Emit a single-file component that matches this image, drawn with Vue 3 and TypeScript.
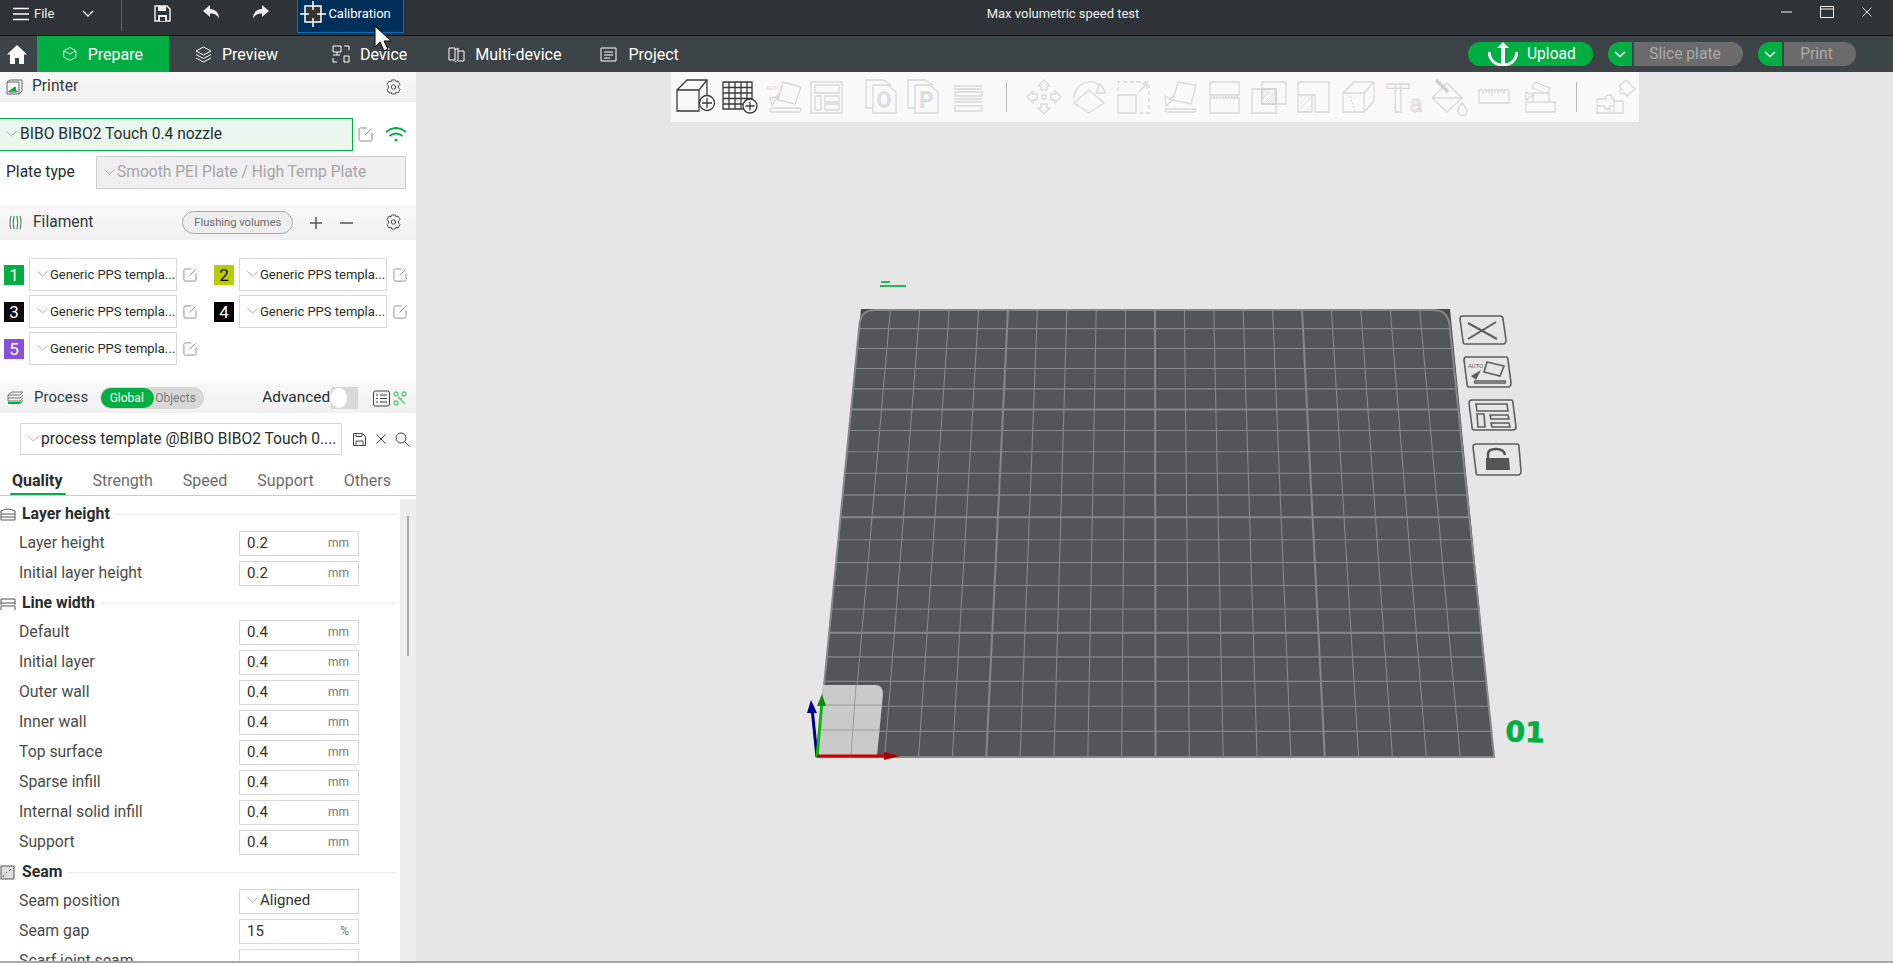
<script setup lang="ts">
interface Filament {
  id: number;
  color: string;
  dark?: boolean;
}

interface Setting {
  label: string;
  value: string;
  unit?: string;
  select?: boolean;
}

interface Group {
  title: string;
  icon: string;
  rows: Setting[];
}

const filaments: Filament[] = [
  { id: 1, color: "#00ae42" },
  { id: 2, color: "#b9cc00", dark: true },
  { id: 3, color: "#0a0a0a" },
  { id: 4, color: "#000000" },
  { id: 5, color: "#8a4fe0" },
];

const mm = (label: string, value: string): Setting => ({ label, value, unit: "mm" });

const groups: Group[] = [
  {
    title: "Layer height",
    icon: '<path d="M1 5q7-4 14 0M1 8h14M1 11h14M1 14h14M1 5v9M15 5v9" />',
    rows: [mm("Layer height", "0.2"), mm("Initial layer height", "0.2")],
  },
  {
    title: "Line width",
    icon: '<path d="M1 4h14v4H1zM1 8v2M15 8v2M1 11h14M1 11v4M15 11v4" />',
    rows: [
      mm("Default", "0.4"),
      mm("Initial layer", "0.4"),
      mm("Outer wall", "0.4"),
      mm("Inner wall", "0.4"),
      mm("Top surface", "0.4"),
      mm("Sparse infill", "0.4"),
      mm("Internal solid infill", "0.4"),
      mm("Support", "0.4"),
    ],
  },
  {
    title: "Seam",
    icon: '<rect x="1" y="2" width="13" height="13" fill="#ddd" /><path d="M3 13l1-2M6 9l1-1M9 7l2-2" />',
    rows: [
      { label: "Seam position", value: "Aligned", select: true },
      { label: "Seam gap", value: "15", unit: "%" },
      { label: "Scarf joint seam", value: "" },
    ],
  },
];

const processTabs = ["Quality", "Strength", "Speed", "Support", "Others"];

const line = "#d9d9d9";
const topIcons: string[] = [
  `<path d="M0 11h22v21H0zM0 11L10 1h20v15M22 11l8-10M22 26v6" stroke="#3a3a3a"/><circle cx="30" cy="24" r="7.5" fill="#fff" stroke="#3a3a3a"/><path d="M30 19v10M25 24h10" stroke="#3a3a3a"/>`,
  `<path d="M1 3h29v27H1zM1 8.5h29M1 14h29M1 19.5h29M1 25h29M7 3v27M13 3v27M19 3v27M25 3v27" stroke="#3a3a3a"/><circle cx="28" cy="27" r="7" fill="#fff" stroke="#3a3a3a"/><path d="M28 22.5v9M23.5 27h9" stroke="#3a3a3a"/>`,
  `<path d="M18 3l18 5-6 17-17-4zM7 29h27q2 0 2 2t-2 2H7q-2 0-2-2t2-2zM5 19l8-1-6 8zM9 20l5-6"/><text x="1" y="11" font-size="6" font-family="Roboto, sans-serif" fill="#d9d9d9" stroke="none">AUTO</text>`,
  `<path d="M3 3h31v31H3zM7 6h24v8H7zM7 17h6v14H7zM17 17h14v6H17zM17 25h14v6H17z"/>`,
  `<path d="M10 29H3V1h17l8 5v0M10 6h15l8 7v21H10z"/><text x="21" y="28" text-anchor="middle" font-size="21" font-family="Roboto, sans-serif" fill="none">O</text>`,
  `<path d="M10 29H3V1h17l8 5v0M10 6h15l8 7v21H10z"/><text x="21" y="28" text-anchor="middle" font-size="21" font-family="Roboto, sans-serif" fill="none">P</text>`,
  `<path d="M4 7h28M4 10h28M5 13h27v4H5zM4 20h28M4 23h28M5 27h27v5H5z"/>`,
  `<path d="M19 1l6 6h-3v4h-6V7h-3zM19 35l6-6h-3v-4h-6v4h-3zM2 18l6-6v3h4v6H8v3zM36 18l-6-6v3h-4v6h4v3z"/><rect x="17" y="16" width="4" height="4"/>`,
  `<path d="M3 24l15-13 15 13-15 10zM3 19C3 8 13 2 22 3q3 .5 6 3M29 5l6 9H25z"/>`,
  `<path d="M2 16h18v18H2z"/><path d="M2 12V3h31v31H24M24 3h-4" stroke-dasharray="4 3"/><path d="M22 14l9-9M26 5h5v5"/>`,
  `<path d="M17 3l18 3-5 19-18-4zM6 30h27q2 0 2 1.500t-2 1.500H6q-2 0-2-1.500T6 30zM4 17l8 4-7 6zM8 21l5-5"/>`,
  `<path d="M4 3h29v13H4zM4 19h29v15H4z"/><path d="M4 17.500h29" stroke-dasharray="1.500 1.500"/>`,
  `<path d="M1 10h24v24H1zM11 3h24v22H11z"/><path d="M11 10h14v15H11z" fill="#f2f2f2" stroke-width="1.600" stroke="#d0d0d0"/><path d="M13 25l12-12M17 25l8-8M21 25l4-4M11 21l8-11M11 15l4-5" stroke-width=".8"/>`,
  `<path d="M2 3h31v30H19V16H2zM2 16v17h14V16"/><path d="M4 24l8-8M4 30l12-13M9 33l7-8M4 19l3-3" stroke-width=".8"/>`,
  `<path d="M2 14h21v19H2zM2 14L13 3h20v19L23 33M23 14L33 3"/><path d="M8 14l2 6 2 6 2 6" stroke-dasharray="1.500 2"/>`,
  `<text x="12" y="33" text-anchor="middle" font-size="38" font-weight="700" font-family="Roboto, sans-serif" fill="none">T</text><text x="30" y="33" text-anchor="middle" font-size="24" font-family="Roboto, sans-serif" fill="none" stroke-width="1">a</text>`,
  `<path d="M1 19L16 4l15 15-15 14zM1 19h30"/><path d="M5 1l12 12" stroke-width="3.500" stroke="#cfcfcf"/><path d="M31 24q-5 6-4 8a4 4 0 0 0 9 0q0-2-5-8z"/>`,
  `<path d="M3 11h30v13H3zM7 11v4M10 11v3M13 11v4M16 11v6M19 11v3M22 11v4M25 11v3M28 11v4"/>`,
  `<path d="M5 23h29v10H5zM14 3l15 6-3 6-15-6zM12 14h16v9H12z"/><path d="M5 13l7 3-7 5z"/>`,
  `<path d="M2 20h9q-1-4 3-4t3 4h2v14H2zM2 27h7q0 3 3 3t3-3h4M15 34v-7M19 22h9v12H19M24 7l7-6 9 9-8 7-3-3q-3 2-4-1t2-3z"/>`,
];

// small offsets between icons, the toolbar spacing is not quite even
const toolShift: Record<number, string> = {
  2: "shift-a",
  3: "shift-a",
  4: "shift-b",
  5: "shift-c",
  7: "shift-d",
  8: "shift-e",
};

const gridLines = (() => {
  const top = { l: 861, r: 1449, y: 309 };
  const bottom = { l: 817, r: 1494, y: 757 };
  const k = (bottom.r - bottom.l) / (top.r - top.l);
  const h: { x1: number; x2: number; y: number; major: boolean }[] = [];
  const v: { x1: number; x2: number; major: boolean }[] = [];
  for (let i = 1; i < 20; i++) {
    const r = i / 20;
    const y = top.y + ((bottom.y - top.y) * r) / (r + (1 - r) * k);
    const f = (y - top.y) / (bottom.y - top.y);
    h.push({
      x1: top.l + (bottom.l - top.l) * f,
      x2: top.r + (bottom.r - top.r) * f,
      y,
      major: i % 5 === 0,
    });
    v.push({
      x1: top.l + (top.r - top.l) * r,
      x2: bottom.l + (bottom.r - bottom.l) * r,
      major: i % 5 === 0,
    });
  }
  return { h, v, topY: top.y, bottomY: bottom.y };
})();
</script>

<template>
  <div class="app">
    <header class="titlebar">
      <div class="file-menu">
        <svg class="ico" width="16" height="14" viewBox="0 0 16 14"><path d="M0 1.500h16M0 7h16M0 12.500h16" stroke="#fff" stroke-width="1.300" /></svg>
        <span>File</span>
      </div>
      <svg class="file-chevron" width="12" height="7" viewBox="0 0 12 7"><path d="M1 1l5 5 5-5" fill="none" stroke="#fff" stroke-width="1.300" /></svg>
      <i class="title-sep"></i>
      <svg class="quick first" width="17" height="17" viewBox="0 0 17 17"><path d="M1 1h12l3 3v12H1z" fill="none" stroke="#eee" stroke-width="1.500" /><path d="M4 1h8v5H4zM4 10h9v6H4z" fill="#eee" /><path d="M6 12h5v4H6z" fill="#2d3336" /></svg>
      <svg class="quick" width="17" height="14" viewBox="0 0 17 14"><path d="M7 0L0 6l7 6V8.500c4 0 7 1 9 5 0-6-4-9.500-9-9.500z" fill="#eee" /></svg>
      <svg class="quick" width="17" height="14" viewBox="0 0 17 14"><path d="M10 0l7 6-7 6V8.500c-4 0-7 1-9 5 0-6 4-9.500 9-9.500z" fill="#eee" /></svg>
      <button class="calibration">
        <svg width="26" height="26" viewBox="0 0 26 26"><rect x="5" y="5" width="16" height="16" fill="#333" stroke="#fff" stroke-width="1.500" /><path d="M13 0v9M13 17v9M0 13h9M17 13h9" stroke="#fff" stroke-width="1.500" /></svg>
        <span>Calibration</span>
      </button>
      <div class="window-title">Max volumetric speed test</div>
      <div class="window-controls">
        <svg width="11" height="2" viewBox="0 0 11 2"><path d="M0 1h11" stroke="#eee" /></svg>
        <svg width="14" height="12" viewBox="0 0 14 12"><path d="M.5.500h13v11H.5zM.5 3h13" fill="none" stroke="#eee" /></svg>
        <svg width="10" height="10" viewBox="0 0 10 10"><path d="M.5.500l9 9M9.500.500l-9 9" stroke="#ddd" /></svg>
      </div>
    </header>

    <nav class="tabbar">
      <svg class="home" width="20" height="19" viewBox="0 0 20 19"><path d="M10 0L0 9.500h3V19h5v-6h4v6h5V9.500h3z" fill="#fff" /></svg>
      <div class="tab active">
        <svg width="17" height="18" viewBox="0 0 17 18"><path d="M8.500 1l7.500 4v8l-7.500 4L1 13V5zM1 5l7.500 4L16 5M8.500 9" fill="none" stroke="#fff" /></svg>
        <span>Prepare</span>
      </div>
      <div class="tab tab-preview">
        <svg width="17" height="18" viewBox="0 0 17 18"><path d="M8.500 2L16 6l-7.500 4L1 6zM1 9.500l7.500 4 7.500-4M1 13l7.500 4 7.500-4" fill="none" stroke="#fff" /></svg>
        <span>Preview</span>
      </div>
      <div class="tab tab-device">
        <svg width="18" height="18" viewBox="0 0 18 18"><path d="M1 1h8v6H1zM5 7v3M1 10h7M12 1h5v4M1 13v4h4M12 17V11h5v6z" fill="none" stroke="#fff" /></svg>
        <span>Device</span>
      </div>
      <div class="tab tab-multi">
        <svg width="17" height="17" viewBox="0 0 17 17"><path d="M1 2h6v12H1zM7 4l3-2v12l-3 2M10 5h6v10h-6" fill="none" stroke="#fff" /></svg>
        <span>Multi-device</span>
      </div>
      <div class="tab">
        <svg width="17" height="17" viewBox="0 0 17 17"><path d="M1 2h15v13H1zM4 6h9M4 9h9M4 12h6" fill="none" stroke="#fff" /></svg>
        <span>Project</span>
      </div>

      <div class="actions">
        <div class="pill upload">
          <svg width="30" height="24" viewBox="0 0 30 24"><path d="M15 0l6 6h-4v16h-4V6H9z" fill="#fff" /><path d="M1 10c1 10 8 13 14 13s13-3 14-13" fill="none" stroke="#fff" stroke-width="3" /></svg>
          <span>Upload</span>
        </div>
        <div class="split">
          <span class="split-arrow"><svg width="12" height="7" viewBox="0 0 12 7"><path d="M1 1l5 4.500L11 1" fill="none" stroke="#fff" stroke-width="1.500" /></svg></span>
          <span class="split-label slice">Slice plate</span>
        </div>
        <div class="split">
          <span class="split-arrow"><svg width="12" height="7" viewBox="0 0 12 7"><path d="M1 1l5 4.500L11 1" fill="none" stroke="#fff" stroke-width="1.500" /></svg></span>
          <span class="split-label print">Print</span>
        </div>
      </div>
    </nav>

    <div class="workspace">
      <aside class="sidebar">
        <section class="panel-head printer-head">
          <svg width="17" height="16" viewBox="0 0 17 16"><path d="M1 3h12v12H1zM1 3l3-2h12v11l-3 3M3 12h8v1H3z" fill="none" stroke="#666" /><path d="M3 12l5-4h2v4z" fill="#00ae42" /></svg>
          <span class="head-title">Printer</span>
          <svg class="gear" width="17" height="17" viewBox="0 0 17 17"><path d="M6.500 1h4l.5 2 2-1 2 3.500-1.500 1.500v2L15 10.500 13 14l-2-1-.5 2h-4L6 13l-2 1-2-3.500L3.500 9V7L2 5.500 4 2l2 1z" fill="none" stroke="#555" /><circle cx="8.500" cy="8" r="2.200" fill="none" stroke="#555" /></svg>
        </section>

        <div class="printer-row">
          <div class="printer-select">
            <svg class="chev" width="11" height="6" viewBox="0 0 11 6"><path d="M.5.500l5 4.500 5-4.500" fill="none" stroke="#aaa" /></svg>
            <span>BIBO BIBO2 Touch 0.4 nozzle</span>
          </div>
          <svg class="edit" width="15" height="15" viewBox="0 0 15 15"><path d="M9 1H2.500Q1 1 1 2.500v10Q1 14 2.500 14h10q1.500 0 1.500-1.500V6M7 8l6.500-6.500" fill="none" stroke="#8a8a8a" /></svg>
          <svg class="wifi" width="22" height="15" viewBox="0 0 22 15"><path d="M1 5q10-8 20 0M4.500 9q6.500-5 13 0" fill="none" stroke="#00ae42" stroke-width="2" /><circle cx="11" cy="13" r="1.500" fill="#00ae42" /></svg>
        </div>

        <div class="plate-row">
          <span class="plate-label">Plate type</span>
          <div class="plate-select">
            <svg class="chev" width="11" height="6" viewBox="0 0 11 6"><path d="M.5.500l5 4.500 5-4.500" fill="none" stroke="#aaa" /></svg>
            <span>Smooth PEI Plate / High Temp Plate</span>
          </div>
        </div>

        <section class="panel-head filament-head">
          <svg width="15" height="15" viewBox="0 0 15 15"><path d="M3 1q-2 6.500 0 13M12 1q2 6.500 0 13" fill="none" stroke="#777" stroke-width="1.200" /><path d="M6 1q-1.500 6.500 0 13M9 1q1.500 6.500 0 13" fill="none" stroke="#00ae42" stroke-width="1.200" /></svg>
          <span class="head-title">Filament</span>
          <span class="flushing">Flushing volumes</span>
          <svg class="fil-add" width="12" height="12" viewBox="0 0 12 12"><path d="M6 0v12M0 6h12" stroke="#555" stroke-width="1.500" /></svg>
          <svg class="fil-del" width="13" height="12" viewBox="0 0 13 12"><path d="M0 6h13" stroke="#555" stroke-width="1.500" /></svg>
          <svg class="gear" width="17" height="17" viewBox="0 0 17 17"><path d="M6.500 1h4l.5 2 2-1 2 3.500-1.500 1.500v2L15 10.500 13 14l-2-1-.5 2h-4L6 13l-2 1-2-3.500L3.500 9V7L2 5.500 4 2l2 1z" fill="none" stroke="#555" /><circle cx="8.500" cy="8" r="2.200" fill="none" stroke="#555" /></svg>
        </section>

        <div class="filaments">
          <div v-for="f in filaments" :key="f.id" class="filament">
            <span class="swatch" :class="{ dark: f.dark }" :style="{ background: f.color }">{{ f.id }}</span>
            <div class="fil-select">
              <svg class="chev" width="11" height="6" viewBox="0 0 11 6"><path d="M.5.500l5 4.500 5-4.500" fill="none" stroke="#aaa" /></svg>
              <span>Generic PPS templa...</span>
            </div>
            <svg width="14" height="14" viewBox="0 0 15 15"><path d="M9 1H2.500Q1 1 1 2.500v10Q1 14 2.500 14h10q1.500 0 1.500-1.500V6M7 8l6.500-6.500" fill="none" stroke="#8a8a8a" /></svg>
          </div>
        </div>

        <section class="panel-head process-head">
          <svg width="17" height="16" viewBox="0 0 17 16"><path d="M1 5l4-3h11l-3 3zM1 5v3h12l3-3M1 8v3h12l3-3" fill="none" stroke="#777" /><path d="M1 11v3h12l3-3v-1L13 12H1z" fill="#00ae42" /></svg>
          <span class="head-title process-title">Process</span>
          <div class="seg">
            <span class="seg-on">Global</span>
            <span class="seg-off">Objects</span>
          </div>
          <span class="advanced">Advanced</span>
          <span class="switch"><i></i></span>
          <svg class="list-ico" width="17" height="17" viewBox="0 0 17 17"><rect x=".5" y="1" width="16" height="15" rx="2" fill="none" stroke="#444" /><path d="M3 5h2M7 5h7M3 8.500h2M7 8.500h7M3 12h2M7 12h7" stroke="#444" /></svg>
          <svg class="tool-ico" width="14" height="15" viewBox="0 0 14 15"><g fill="none" stroke="#5cc48a" stroke-width="1.300"><circle cx="3" cy="3" r="2" /><circle cx="11" cy="3" r="2" /><circle cx="3" cy="12" r="2" /><path d="M5 6l7 7M9 7l-2 2" /></g></svg>
        </section>

        <div class="preset-row">
          <div class="preset-select">
            <svg class="chev" width="11" height="6" viewBox="0 0 11 6"><path d="M.5.500l5 4.500 5-4.500" fill="none" stroke="#aaa" /></svg>
            <span>process template @BIBO BIBO2 Touch 0....</span>
          </div>
          <svg width="13" height="13" viewBox="0 0 13 13"><path d="M.5.500h9l3 3v9H.5zM3 .5v3h6v-3M3 12.500V8h7v4.500" fill="none" stroke="#444" /></svg>
          <svg class="preset-x" width="10" height="10" viewBox="0 0 10 10"><path d="M.5.500l9 9M9.500.500l-9 9" stroke="#444" /></svg>
          <svg width="15" height="15" viewBox="0 0 15 15"><circle cx="6" cy="6" r="5" fill="none" stroke="#444" /><path d="M9.500 9.500l5 5" stroke="#444" /></svg>
        </div>

        <div class="process-tabs">
          <span v-for="(t, i) in processTabs" :key="t" class="ptab" :class="{ on: i === 0 }">{{ t }}</span>
        </div>

        <div class="settings">
          <template v-for="g in groups" :key="g.title">
            <div class="group-head">
              <svg width="16" height="16" viewBox="0 0 16 16" fill="none" stroke="#555" v-html="g.icon"></svg>
              <span>{{ g.title }}</span>
              <i></i>
            </div>
            <div v-for="r in g.rows" :key="r.label" class="row">
              <span class="row-label">{{ r.label }}</span>
              <div class="field" :class="{ 'field-select': r.select }">
                <svg v-if="r.select" class="chev" width="11" height="6" viewBox="0 0 11 6"><path d="M.5.500l5 4.500 5-4.500" fill="none" stroke="#aaa" /></svg>
                <span class="value">{{ r.value }}</span>
                <span v-if="r.unit" class="unit">{{ r.unit }}</span>
              </div>
            </div>
          </template>
          <div class="scroll-track"><i></i></div>
        </div>
      </aside>

      <main class="viewport">
        <svg class="scene" viewBox="416 72 1477 889" preserveAspectRatio="xMinYMin meet">
          <path d="M817 757L861 309H1450L1494 757Z" fill="#484b4b" />
          <path d="M817 757L859.500 324Q861 310 875 310H1434Q1447 310 1449.500 324L1494 757Z" fill="#535656" stroke="#858887" stroke-width="2" />
          <line v-for="(l, i) in gridLines.v" :key="'v' + i" :x1="l.x1" :y1="gridLines.topY" :x2="l.x2" :y2="gridLines.bottomY" stroke="#858887" :stroke-width="l.major ? 2 : 1.100" />
          <line v-for="(l, i) in gridLines.h" :key="'h' + i" :x1="l.x1" :y1="l.y" :x2="l.x2" :y2="l.y" stroke="#858887" :stroke-width="l.major ? 2 : 1.100" />

          <path d="M823 685H875Q883 685 883 694L877 756H818Z" fill="#c9cbca" />
          <path d="M856 685L851 756M822 705H881M820 730H879" stroke="#9a9c9b" stroke-width="1" />

          <path d="M817 757L812 708" stroke="#00008b" stroke-width="3" />
          <path d="M811 700L817 713H807Z" fill="#00008b" />
          <path d="M817 757L822 702" stroke="#0cb50c" stroke-width="3" />
          <path d="M822 694L826 706H817Z" fill="#0a8f0a" />
          <path d="M817 756H886" stroke="#cc0000" stroke-width="3" />
          <path d="M900 756L884 752V760Z" fill="#a80000" />

          <rect x="880" y="285" width="26" height="2" fill="#22b85c" />
          <rect x="881" y="281" width="9" height="2" fill="#22b85c" />

          <text class="plate-no" transform="translate(1505 741) rotate(2) scale(1.02 1)">01</text>

          <g fill="none" stroke="#5e5e5e" stroke-width="1.600">
            <path d="M1462 316H1500Q1503 316 1503 319L1506 340Q1506 344 1503 344H1465Q1463 344 1463 341L1460 319Q1460 316 1462 316Z" />
            <path d="M1468 323L1497 339M1496 322L1468 339" stroke-width="2" />
            <path d="M1466 357H1506Q1508 357 1508 360L1511 383Q1511 387 1508 387H1469Q1467 387 1467 384L1464 360Q1464 357 1466 357Z" />
            <path d="M1487 362L1504 366 1500 376 1484 372ZM1475 381H1505Q1506 382 1505 383H1475Q1474 382 1475 381Z" />
            <path d="M1472 400H1511Q1513 400 1513 403L1516 427Q1516 430 1513 430H1474Q1472 430 1472 427L1469 403Q1469 400 1472 400Z" />
            <path d="M1476 404H1507L1508 411H1477ZM1477 414H1484L1485 427H1478ZM1490 415H1508L1509 419H1491ZM1491 423H1509L1510 427H1492Z" />
            <path d="M1476 444H1517Q1519 444 1519 447L1521 471Q1521 475 1518 475H1478Q1476 475 1476 472L1473 447Q1473 444 1476 444Z" />
          </g>
          <path d="M1486 458H1509L1510 470H1486Z" fill="#555" />
          <path d="M1488 459V454Q1488 449 1496 449T1505 455" fill="none" stroke="#555" stroke-width="2.500" />
          <path d="M1471 376L1481 370 1476 380Z" fill="#5e5e5e" />
          <text x="1468" y="368" class="auto-mark">AUTO</text>
        </svg>

        <div class="toolbar-wrap">
          <div class="toolbar">
            <template v-for="(icon, i) in topIcons" :key="i">
              <i v-if="i === 7 || i === 19" class="tool-sep" :class="'sep-' + i"></i>
              <svg
                class="tool"
                :class="toolShift[i]"
                width="36"
                height="36"
                viewBox="0 0 36 36"
                fill="none"
                :stroke="line"
                stroke-width="1.300"
                v-html="icon"
              ></svg>
            </template>
          </div>
        </div>
      </main>
    </div>

    <div class="status-line"></div>

    <svg class="cursor" width="20" height="27" viewBox="0 0 20 27"><path d="M1 1v21l5-5 4 9 4-2-4-8h7z" fill="#fff" stroke="#000" stroke-width="1" /></svg>
  </div>
</template>

<style scoped>
.app {
  position: relative;
  width: 1893px;
  height: 963px;
  display: flex;
  flex-direction: column;
  overflow: hidden;
  font-family: Roboto, "Noto Sans", sans-serif;
  color: #333;
}

.titlebar {
  height: 36px;
  flex: none;
  box-sizing: border-box;
  background: #2d3336;
  border-bottom: 1px solid #101214;
  display: flex;
  align-items: flex-start;
  color: #eee;
  font-size: 13px;
}

.file-menu {
  display: flex;
  align-items: center;
  gap: 5px;
  margin: 6px 0 0 13px;
}

.file-chevron {
  margin: 10px 0 0 28px;
}

.title-sep {
  width: 1px;
  height: 31px;
  margin-left: 27px;
  background: #666;
}

.quick {
  margin: 5px 0 0 32px;
}

.calibration {
  width: 107px;
  height: 33px;
  margin-left: 28px;
  padding: 0 0 5px 2px;
  box-sizing: border-box;
  background: #00305a;
  border: 1px solid #0a6ebd;
  border-top: none;
  color: #fff;
  font: inherit;
  display: flex;
  align-items: center;
  gap: 2px;
}

.window-title {
  position: absolute;
  left: 0;
  width: 2126px;
  top: 6px;
  text-align: center;
  line-height: 16px;
}

.window-controls {
  margin-left: auto;
  display: flex;
  align-items: center;
  gap: 28px;
  margin-top: 6px;
  padding-right: 21px;
  height: 12px;
}

.tabbar {
  height: 36px;
  flex: none;
  background: #3c4447;
  display: flex;
  align-items: center;
  color: #fff;
  font-size: 16px;
}

.home {
  margin: 0 10px 0 7px;
}

.tab {
  height: 36px;
  display: flex;
  align-items: center;
  gap: 11px;
  padding: 0 26px;
}

.tab.active {
  width: 132px;
  box-sizing: border-box;
  background: #00ae42;
}

.tab-preview {
  gap: 10px;
}

.tab-device {
  padding: 0 15px 0 28px;
  gap: 10px;
}

.tab-multi {
  padding-right: 13px;
  gap: 10px;
}

.actions {
  margin-left: auto;
  display: flex;
  align-items: center;
  padding-right: 37px;
  font-size: 15.6px;
}

.pill {
  height: 24px;
  border-radius: 12px;
}

.upload {
  width: 125px;
  box-sizing: border-box;
  padding-left: 20px;
  background: #00ae42;
  display: flex;
  align-items: center;
  gap: 9px;
  overflow: hidden;
}

.split {
  display: flex;
  height: 24px;
  margin-left: 15px;
  gap: 2px;
}

.split-arrow {
  width: 24px;
  background: #00ae42;
  border-radius: 12px 0 0 12px;
  display: flex;
  align-items: center;
  justify-content: center;
}

.split-label {
  box-sizing: border-box;
  padding-right: 7px;
  background: #6b6b6b;
  color: #a9a9a9;
  border-radius: 0 12px 12px 0;
  display: flex;
  align-items: center;
  justify-content: center;
}

.slice {
  width: 109px;
}

.print {
  width: 72px;
}

.workspace {
  flex: 1;
  min-height: 0;
  display: flex;
}

.sidebar {
  width: 416px;
  flex: none;
  background: #fff;
  display: flex;
  flex-direction: column;
  overflow: hidden;
}

.panel-head {
  flex: none;
  background: linear-gradient(#f8f8f8, #f1f1f1);
  display: flex;
  align-items: center;
}

.head-title {
  font-size: 15.6px;
  color: #323a3d;
  margin-top: -2px;
}

.printer-head {
  height: 30px;
  padding-left: 6px;
  gap: 9px;
}

.gear {
  margin-left: auto;
  margin-right: 14px;
}

.printer-row {
  height: 33px;
  margin-top: 16px;
  flex: none;
  display: flex;
  align-items: center;
}

.chev {
  flex: none;
}

.printer-select {
  width: 353px;
  height: 33px;
  box-sizing: border-box;
  background: #e9f7ee;
  border: 1px solid #00ae42;
  border-left: none;
  display: flex;
  align-items: center;
  gap: 3px;
  padding: 0 0 2px 6px;
  font-size: 15.6px;
  color: #262e30;
}

.edit {
  margin-left: 5px;
}

.wifi {
  margin-left: 12px;
}

.plate-row {
  height: 33px;
  margin-top: 5px;
  flex: none;
  display: flex;
  align-items: center;
  font-size: 15.6px;
}

.plate-label {
  width: 96px;
  padding: 0 0 2px 6px;
  box-sizing: border-box;
  color: #262e30;
}

.plate-select {
  width: 310px;
  height: 33px;
  box-sizing: border-box;
  background: #efefef;
  border: 1px solid #ccc;
  display: flex;
  align-items: center;
  gap: 2px;
  padding: 0 0 2px 7px;
  color: #a6a6a6;
}

.filament-head {
  height: 35px;
  margin-top: 16px;
  padding-left: 8px;
  gap: 10px;
}

.flushing {
  width: 111px;
  height: 23px;
  margin-left: 79px;
  box-sizing: border-box;
  border: 1px solid #aaa;
  border-radius: 12px;
  background: #eee;
  font-size: 11.2px;
  color: #6b6b6b;
  display: flex;
  align-items: center;
  justify-content: center;
}

.fil-add {
  margin-left: 7px;
}

.fil-del {
  margin-left: 8px;
}

.filaments {
  flex: none;
  height: 143px;
  padding: 18px 0 0 4px;
  box-sizing: border-box;
  display: grid;
  grid-template-columns: 210px 193px;
  grid-auto-rows: 33px;
  row-gap: 4px;
}

.filament {
  display: flex;
  align-items: center;
}

.swatch {
  width: 20px;
  height: 20px;
  margin-right: 5px;
  color: #fff;
  font-size: 17px;
  line-height: 20px;
  text-align: center;
}

.swatch.dark {
  color: #111;
}

.fil-select {
  width: 148px;
  height: 33px;
  box-sizing: border-box;
  border: 1px solid #d8d8d8;
  margin-right: 6px;
  display: flex;
  align-items: center;
  gap: 2px;
  padding: 0 0 1px 7px;
  font-size: 13px;
  color: #262e30;
  white-space: nowrap;
  overflow: hidden;
}

.process-head {
  height: 30px;
  padding-left: 7px;
}

.process-title {
  margin-left: 10px;
  font-size: 15px;
}

.seg {
  width: 104px;
  height: 22px;
  margin-left: 12px;
  box-sizing: border-box;
  background: #d8d8d8;
  border-radius: 11px;
  display: flex;
  align-items: center;
  font-size: 12px;
}

.seg-on {
  width: 53px;
  height: 20px;
  margin-left: 1px;
  padding-right: 2px;
  box-sizing: border-box;
  border-radius: 10px;
  background: #00ae42;
  color: #fff;
  display: flex;
  align-items: center;
  justify-content: center;
}

.seg-off {
  margin-left: 1px;
  color: #7a7a7a;
}

.advanced {
  margin-left: 58px;
  margin-top: -2px;
  font-size: 15.4px;
  color: #262e30;
}

.switch {
  width: 27px;
  height: 22px;
  margin-left: 1px;
  background: #d9d9d9;
  display: flex;
  align-items: center;
}

.switch i {
  width: 16px;
  height: 20px;
  border-radius: 50%;
  background: #fff;
}

.list-ico {
  margin-left: 15px;
}

.tool-ico {
  margin-left: 3px;
}

.preset-row {
  height: 32px;
  margin-top: 10px;
  flex: none;
  display: flex;
  align-items: center;
  padding-left: 20px;
}

.preset-select {
  width: 322px;
  height: 32px;
  margin-right: 11px;
  box-sizing: border-box;
  border: 1px solid #d8d8d8;
  display: flex;
  align-items: center;
  gap: 2px;
  padding-left: 7px;
  font-size: 15.6px;
  color: #262e30;
  white-space: nowrap;
}

.preset-x {
  margin: 0 9px 0 10px;
}

.process-tabs {
  height: 41px;
  flex: none;
  box-sizing: border-box;
  border-bottom: 1px solid #ccc;
  display: flex;
  padding-left: 12px;
  gap: 30px;
  font-size: 16px;
  color: #6b6b6b;
}

.ptab {
  position: relative;
  padding-top: 16px;
}

.ptab.on {
  font-weight: 700;
  color: #262e30;
}

.ptab.on::after {
  content: "";
  position: absolute;
  left: -2px;
  right: -3px;
  bottom: 0;
  height: 2px;
  border-radius: 1px;
  background: #00ae42;
}

.settings {
  position: relative;
  flex: 1;
  min-height: 0;
  overflow: hidden;
  padding-top: 3px;
  padding-right: 20px;
}

.group-head {
  height: 28px;
  margin-top: 1px;
  display: flex;
  align-items: center;
  font-size: 15.8px;
  font-weight: 700;
  color: #262e30;
}

.group-head svg {
  flex: none;
  margin-right: 5px;
}

.group-head span {
  margin: -1px 0 0 1px;
}

.group-head i {
  flex: 1;
  height: 1px;
  margin-left: 6px;
  background: #eee;
}

.row {
  height: 30px;
  display: flex;
  align-items: center;
  font-size: 15.8px;
  color: #4a4a4a;
}

.row-label {
  width: 239px;
  padding: 0 0 1px 19px;
  box-sizing: border-box;
}

.field {
  width: 120px;
  height: 25px;
  box-sizing: border-box;
  border: 1px solid #d8d8d8;
  display: flex;
  align-items: center;
  padding: 0 9px 0 7px;
  color: #333;
  font-size: 15px;
}

.field-select {
  padding: 0 9px 2px 7px;
  gap: 2px;
}

.unit {
  margin-left: auto;
  font-size: 12px;
  color: #777;
}

.scroll-track {
  position: absolute;
  top: 3px;
  right: 0;
  bottom: 0;
  width: 16px;
  background: #eee;
}

.scroll-track i {
  position: absolute;
  left: 7px;
  top: 17px;
  width: 2px;
  height: 140px;
  background: #aaa;
}

.viewport {
  position: relative;
  flex: 1;
  min-width: 0;
  background: #e6e6e6;
}

.scene {
  position: absolute;
  inset: 0;
  width: 100%;
  height: 100%;
}

.plate-no {
  font-family: "DejaVu Sans", sans-serif;
  font-weight: 700;
  font-size: 28px;
  fill: #00ae42;
  stroke: #00ae42;
  stroke-width: 0.6px;
}

.auto-mark {
  font-family: Roboto, sans-serif;
  font-size: 6px;
  fill: #5e5e5e;
}

.toolbar-wrap {
  position: absolute;
  top: 0;
  left: 0;
  right: 0;
  display: flex;
  justify-content: center;
}

.toolbar {
  width: 968px;
  height: 50px;
  box-sizing: border-box;
  background: #f9f9f9;
  display: flex;
  align-items: center;
  padding-left: 6px;
}

.tool {
  flex: none;
  margin-right: 9px;
  overflow: visible;
}

/* cumulative nudges, each one moves the icons after it too */
.shift-a {
  margin-left: -2px;
}

.shift-b {
  margin-left: 10px;
}

.shift-c {
  margin-left: -3px;
}

.shift-d {
  margin-left: 18px;
}

.shift-e {
  margin-left: 1px;
}

.tool-sep {
  flex: none;
  width: 1px;
  height: 30px;
  margin-left: 8px;
  background: #b8b8b8;
}

.sep-7 {
  margin-left: 11px;
}

.sep-19 {
  margin-left: 10px;
  margin-right: 18px;
}

.status-line {
  flex: none;
  height: 2px;
  background: #a8a8a8;
}

.cursor {
  position: absolute;
  left: 374px;
  top: 25px;
}
</style>

<style>
html,
body {
  margin: 0;
  background: #e6e6e6;
}
</style>
